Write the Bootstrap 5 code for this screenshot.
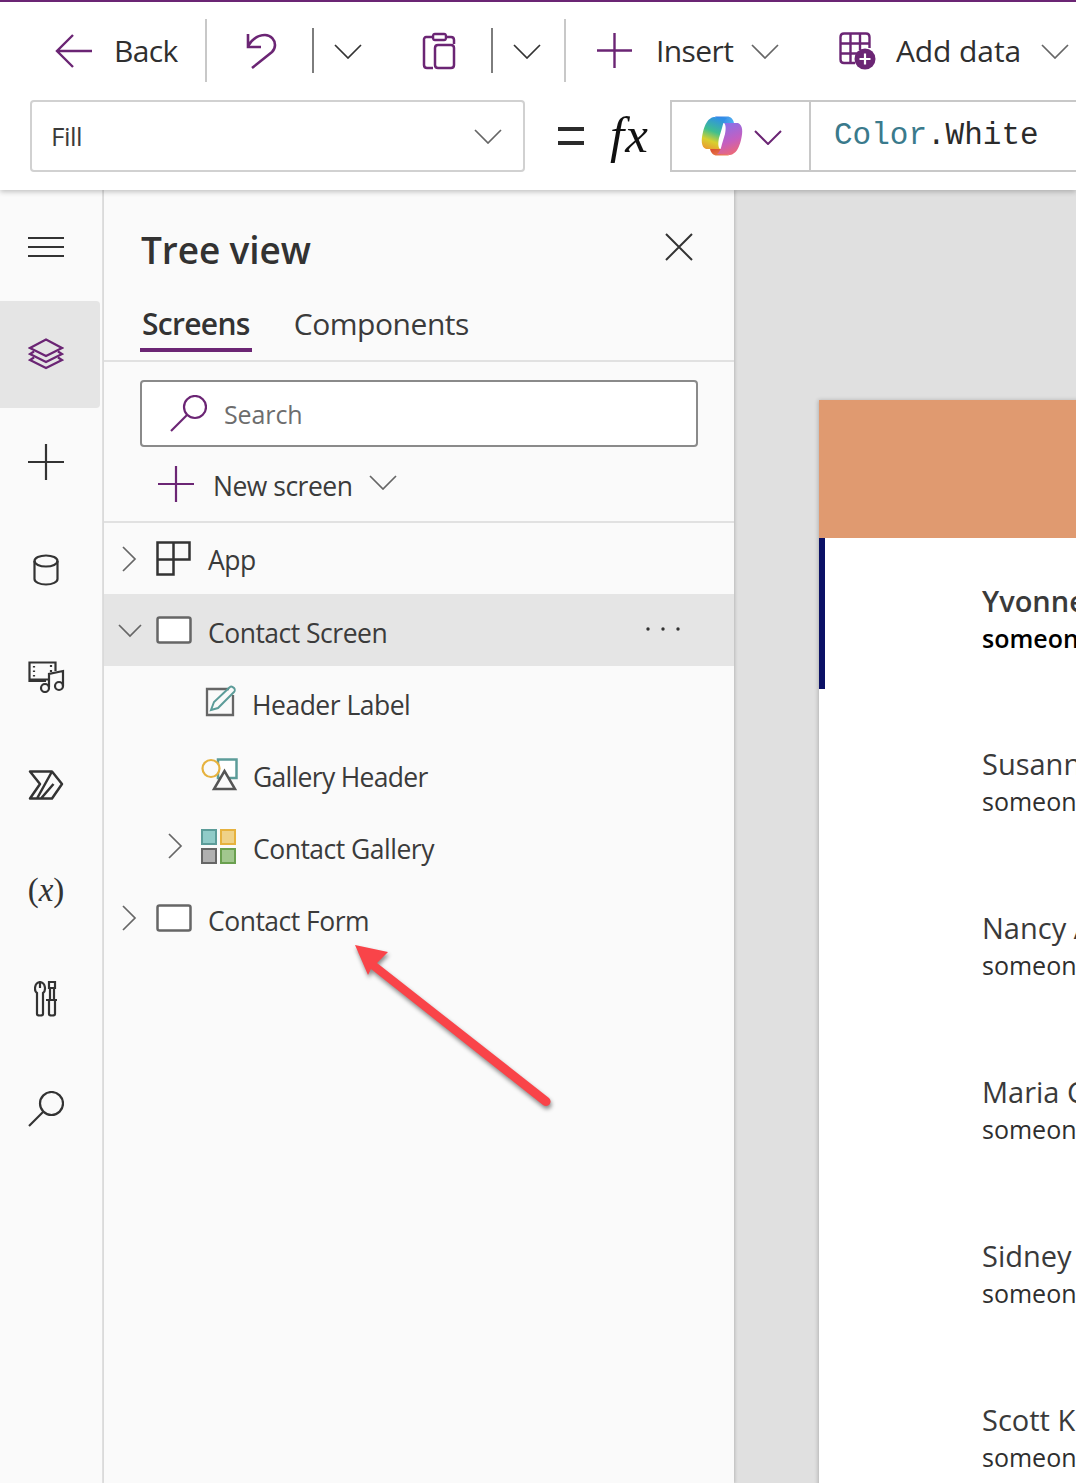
<!DOCTYPE html>
<html lang="en">
<head>
    <meta charset="UTF-8">
    <meta name="viewport" content="width=device-width, initial-scale=1.0">
    <title>Tree view</title>
    <link href="https://cdn.jsdelivr.net/npm/bootstrap@5.3.3/dist/css/bootstrap.min.css" rel="stylesheet">
    <style>
        html, body { height: 100%; }
        body {
            height: 1483px;
            overflow: hidden;
            background: #fafafa;
            color: #333;
            font-family: "Open Sans", "Noto Sans", sans-serif;
        }
        svg { display: block; flex: none; fill: none; stroke-linecap: butt; }
        .pu { stroke: #6b2574; }
        .dk { stroke: #333; }
        .gr { stroke: #666; }

        /* top */
        .top-area { height: 190px; background: #fff; border-top: 2px solid #6b2574; box-shadow: 0 2px 5px rgba(0,0,0,.22); position: relative; z-index: 3; flex: none; }
        .ribbon { height: 97px; font-size: 30px; letter-spacing: -.6px; color: #2f2f2f; }
        .rib-sep { width: 2px; height: 63px; background: #c8c8c8; flex: none; }
        .rib-sep-sm { width: 2px; height: 45px; background: #7d7d7d; flex: none; }
        .fx-row { height: 91px; padding: 0 0 18px 30px; background: #fff; }
        .prop-box { width: 495px; height: 72px; border: 2px solid #d1d1d1; border-radius: 4px; padding: 0 21px 0 19px; font-size: 26px; letter-spacing: -.5px; color: #3b3b3b; }
        .prop-box span { padding-top: 2px; }
        .eq-sign { width: 26px; height: 18px; border-top: 4px solid #2b2b2b; border-bottom: 4px solid #2b2b2b; margin-left: 33px; }
        .fx-sign { font-family: "Liberation Serif", serif; font-style: italic; font-size: 51px; line-height: 1; color: #111; width: 60px; margin-left: 26px; letter-spacing: 1px; }
        .copilot-box { width: 141px; height: 72px; border: 2px solid #c8c8c8; padding-left: 29px; gap: 11px; }
        .code-box { flex: 1; height: 72px; border: 2px solid #c8c8c8; border-left: 0; border-right: 0; padding: 2px 0 0 23px; font-family: "Liberation Mono", monospace; font-size: 31px; color: #2b2b2b; }
        .code-type { color: #3a7a8c; }

        /* body */
        .work-area { height: 1293px; }
        .side-rail { width: 104px; flex: none; border-right: 2px solid #e1e1e1; padding-top: 3px; background: #fafafa; }
        .rail-btn { height: 107.6px; width: 100px; }
        .rail-btn.on { background: #e5e5e5; border-radius: 0 4px 4px 0; }
        .rail-x { font-family: "Liberation Serif", serif; font-size: 33px; line-height: 1; color: #333; margin-top: -4px; }
        .tree-panel { width: 630px; flex: none; background: #fafafa; box-shadow: 1px 0 3px rgba(0,0,0,.18); position: relative; z-index: 2; }
        .panel-head { height: 113px; padding: 8px 41px 0 37px; }
        .panel-title { font-size: 37px; font-weight: 600; letter-spacing: -.1px; color: #323232; margin: 0; }
        .tabs-bar { height: 59px; padding-left: 36px; border-bottom: 2px solid #e1e1e1; gap: 40px; font-size: 30px; letter-spacing: -.45px; }
        .tabs-bar .nav-link { color: #3b3b3b; padding: 0 2px; height: 49px; line-height: 42px; }
        .tabs-bar .nav-link.active { color: #333; font-weight: 600; letter-spacing: -.7px; border-bottom: 4px solid #6b2574; }
        .search-box { width: 558px; height: 67px; margin: 18px 0 0 36px; background: #fff; border: 2px solid #8a8a8a; border-radius: 4px; padding: 0 0 0 28px; gap: 17px; font-size: 25px; letter-spacing: -.1px; color: #6d6d6d; }
        .search-box span { padding-top: 2px; }
        .new-row { height: 76px; padding-left: 54px; border-bottom: 2px solid #e1e1e1; font-size: 26.5px; letter-spacing: -.5px; color: #3b3b3b; }
        .new-row span { padding-top: 6px; }
        .tree-list { border-radius: 0; }
        .tree-row { height: 72px; padding: 0; background: transparent; border: 0; font-size: 26.5px; letter-spacing: -.5px; color: #3b3b3b; display: flex; align-items: center; position: relative; }
        .tree-row:first-child { height: 71px; }
        .tree-row.on { background: #e5e5e5; }
        .tw { width: 52px; padding-left: 17px; flex: none; }
        .tree-row.on .tw { padding-left: 14px; }
        .tw2 { width: 97px; padding-left: 59px; flex: none; }
        .row-name, .row-name2 { margin-left: 16px; padding-top: 7px; }
        .tree-row:first-child .row-name { padding-top: 4px; }
        .row-dots { position: absolute; left: 542px; top: 33px; }

        /* canvas */
        .canvas-area { flex: 1; min-width: 0; background: #e0e0e0; padding: 210px 0 0 85px; overflow: hidden; }
        .app-screen { width: 400px; background: #fff; height: 1200px; box-shadow: -1px 0 4px rgba(0,0,0,.2); }
        .app-head { height: 138px; background: #e09a70; }
        .person { height: 164px; padding: 47px 0 0 163px; white-space: nowrap; position: relative; line-height: 1; }
        .person.sel { padding-top: 48px; }
        .person.sel::before { content: ""; position: absolute; left: 0; top: 0; width: 6px; height: 151px; background: #0b1166; }
        .person-name { font-size: 29px; color: #3a3a3a; height: 39.5px; }
        .person-mail { font-size: 25px; color: #2e2e2e; }
        .person.sel .person-name { font-weight: 600; }
        .person.sel .person-mail { font-weight: 600; color: #000; }

        .red-arrow { position: absolute; left: 340px; top: 930px; z-index: 5; filter: drop-shadow(1px 3px 2px rgba(0,0,0,.45)); }
    </style>
</head>
<body>
    <div class="d-flex flex-column">
        <div class="top-area">
            <div class="ribbon d-flex align-items-center">
                <svg style="margin-left:55px" width="38" height="36" viewBox="0 0 38 36"><path class="pu" stroke-width="2.4" d="M37 18H2M18 2 2 18l16 16"/></svg>
                <span style="margin-left:21px;width:91px">Back</span>
                <span class="rib-sep"></span>
                <svg style="margin-left:38px" width="34" height="38" viewBox="0 0 34 38"><path class="pu" stroke-width="2.6" d="M3 2v13h13M3 14C8 6 14 3 20 3c6 0 10 5 10 10 0 3-1 5-3 7L7 36"/></svg>
                <span class="rib-sep-sm" style="margin-left:33px"></span>
                <svg style="margin-left:20px" width="28" height="16" viewBox="0 0 28 16"><path class="dk" stroke-width="1.7" d="M1 2l13 13L27 2"/></svg>
                <svg style="margin-left:60px" width="34" height="38" viewBox="0 0 34 38"><path class="pu" stroke-width="2.5" d="M12 5H4a2.500 2.500 0 0 0-2 3v25c0 2 1 3 3 3h6M23 5h6c2 0 3 1 3 3v4M13 2h9c2 0 2 1 2 3s0 3-2 3h-9c-2 0-2-1-2-3s0-3 2-3zM16 13h13c2 0 3 1 3 3v17c0 2-1 3-3 3H16c-2 0-3-1-3-3V16c0-2 1-3 3-3z"/></svg>
                <span class="rib-sep-sm" style="margin-left:35px"></span>
                <svg style="margin-left:20px" width="28" height="16" viewBox="0 0 28 16"><path class="dk" stroke-width="1.7" d="M1 2l13 13L27 2"/></svg>
                <span class="rib-sep" style="margin-left:23px"></span>
                <svg style="margin-left:31px" width="35" height="35" viewBox="0 0 35 35"><path class="pu" stroke-width="2.4" d="M17.500 0v35M0 17.500h35"/></svg>
                <span style="margin-left:24px;width:95px">Insert</span>
                <svg style="margin-left:0" width="28" height="16" viewBox="0 0 28 16"><path class="gr" stroke-width="1.7" d="M1 2l13 13L27 2"/></svg>
                <svg style="margin-left:60px" width="37" height="38" viewBox="0 0 37 38"><path class="pu" stroke-width="2.4" d="M16 31H5c-2 0-3.500-1.500-3.500-3.500V5C1.500 3 3 1.500 5 1.500h22C29 1.500 30.500 3 30.500 5v11M1.500 11.500h29M1.500 21.500H20M11.500 1.500V31M21 1.500V18"/><circle cx="26" cy="27" r="10.500" fill="#6b2574"/><path d="M26 21.500v11M20.500 27h11" stroke="#fff" stroke-width="2.200"/></svg>
                <span style="margin-left:20px;width:145px;letter-spacing:-.1px">Add data</span>
                <svg width="28" height="16" viewBox="0 0 28 16"><path class="gr" stroke-width="1.7" d="M1 2l13 13L27 2"/></svg>
            </div>
            <div class="fx-row d-flex align-items-center">
                <div class="prop-box d-flex align-items-center justify-content-between">
                    <span>Fill</span>
                    <svg width="28" height="16" viewBox="0 0 28 16"><path class="gr" stroke-width="1.7" d="M1 2l13 13L27 2"/></svg>
                </div>
                <div class="eq-sign"></div>
                <div class="fx-sign">fx</div>
                <div class="copilot-box d-flex align-items-center">
                    <svg width="42" height="40" viewBox="0 0 42 40">
                        <defs>
                            <linearGradient id="cpA" x1="0.6" y1="0" x2="0.3" y2="1"><stop offset="0" stop-color="#2f8fe8"/><stop offset=".45" stop-color="#3fbf8f"/><stop offset=".75" stop-color="#d8d030"/><stop offset="1" stop-color="#e8a030"/></linearGradient>
                            <linearGradient id="cpB" x1="0.4" y1="0" x2="0.7" y2="1"><stop offset="0" stop-color="#8a70e8"/><stop offset=".55" stop-color="#c45fc0"/><stop offset="1" stop-color="#f06a70"/></linearGradient>
                            <linearGradient id="cpC" x1="0" y1="0" x2="1" y2="0"><stop offset="0" stop-color="#2d6fe0"/><stop offset="1" stop-color="#4fb0f0"/></linearGradient>
                            <linearGradient id="cpD" x1="0" y1="0" x2="1" y2="1"><stop offset="0" stop-color="#d84a30"/><stop offset="1" stop-color="#f08a50"/></linearGradient>
                        </defs>
                        <path fill="url(#cpC)" d="M14 .5h12c4 0 6 2.500 7 6.500H21z"/>
                        <path fill="url(#cpD)" d="M28 39.500H16c-4 0-6-2.500-7-6.500h12z"/>
                        <path fill="url(#cpA)" d="M13 1C7 2 4 8 2 16c-2 8-2 15 3 17h14c-2-2-2-6-1-11l3-10c1-4 2-8 5-10z"/>
                        <path fill="url(#cpB)" d="M29 39c6-1 9-7 11-15 2-8 2-15-3-17H23c2 2 2 6 1 11l-3 10c-1 4-2 8-5 10z"/>
                    </svg>
                    <svg style="margin-top:2px" width="28" height="16" viewBox="0 0 28 16"><path class="pu" stroke-width="2" d="M1 2l13 13L27 2"/></svg>
                </div>
                <div class="code-box d-flex align-items-center"><span><span class="code-type">Color</span>.White</span></div>
            </div>
        </div>

        <div class="work-area d-flex">
            <div class="side-rail d-flex flex-column">
                <div class="rail-btn pe-2 d-flex align-items-center justify-content-center">
                    <svg width="36" height="22" viewBox="0 0 36 22"><path class="dk" stroke-width="2" d="M0 2h36M0 11h36M0 20h36"/></svg>
                </div>
                <div class="rail-btn on pe-2 d-flex align-items-center justify-content-center">
                    <svg width="36" height="32" viewBox="0 0 36 32"><path class="pu" stroke-width="2.200" d="M18 1.500 34 10 18 18 2 10zM6 13.500 2 16l16 8 16-8-4-2.500M6 19.500 2 22l16 8 16-8-4-2.500"/></svg>
                </div>
                <div class="rail-btn pe-2 d-flex align-items-center justify-content-center">
                    <svg width="36" height="36" viewBox="0 0 36 36"><path class="dk" stroke-width="2.200" d="M18 0v36M0 18h36"/></svg>
                </div>
                <div class="rail-btn pe-2 d-flex align-items-center justify-content-center">
                    <svg width="26" height="32" viewBox="0 0 26 32"><path class="dk" stroke-width="2.200" d="M1.500 7v18c0 3 5 5.500 11.500 5.500s11.500-2.500 11.500-5.500V7"/><ellipse class="dk" cx="13" cy="7" rx="11.500" ry="5.500" stroke-width="2.200"/></svg>
                </div>
                <div class="rail-btn pe-2 d-flex align-items-center justify-content-center">
                    <svg width="37" height="32" viewBox="0 0 37 32"><path class="dk" stroke-width="2.200" d="M18 20H1.500V1.500h26V10M1.500 18.500H20M6 5v1.500M6 9.500V11M6 14v1.500M23 4v2M23 9v2"/><path class="dk" stroke-width="2.200" d="M21 26V13l14-3v15"/><circle class="dk" cx="17" cy="27" r="4" stroke-width="2.200"/><circle class="dk" cx="31" cy="25" r="4" stroke-width="2.200"/></svg>
                </div>
                <div class="rail-btn pe-2 d-flex align-items-center justify-content-center">
                    <svg width="36" height="30" viewBox="0 0 36 30"><path stroke="#333" stroke-width="2.500" stroke-linejoin="round" d="M2 1.500h22L34 14 24 28.500H2L12 14zM24 1.500 9 28.500M13 28.500 25.500 14"/></svg>
                </div>
                <div class="rail-btn pe-2 d-flex align-items-center justify-content-center">
                    <div class="rail-x">(<i>x</i>)</div>
                </div>
                <div class="rail-btn pe-2 d-flex align-items-center justify-content-center">
                    <svg width="24" height="37" viewBox="0 0 24 37"><path class="dk" stroke-width="2.200" d="M3 12v21c0 2 6 2 6 0V12c3-2 3-10-3-11C0 2 0 10 3 12zM6 1v6M15 1h6v6h-6zM16 7v11M20 7v11M12 19h11M15 19v14c0 2 6 2 6 0V19"/></svg>
                </div>
                <div class="rail-btn pe-2 d-flex align-items-center justify-content-center">
                    <svg width="36" height="36" viewBox="0 0 36 36" style="margin-top:3px"><circle class="dk" cx="23.500" cy="12.500" r="11.500" stroke-width="2.200"/><path class="dk" stroke-width="2.200" d="M15 21 1 35"/></svg>
                </div>
            </div>

            <div class="tree-panel">
                <div class="panel-head d-flex align-items-center justify-content-between">
                    <h1 class="panel-title">Tree view</h1>
                    <svg width="28" height="28" viewBox="0 0 28 28" style="margin-top:-8px"><path class="dk" stroke-width="2" d="M1 1l26 26M27 1 1 27"/></svg>
                </div>
                <ul class="nav tabs-bar">
                    <li class="nav-item"><a class="nav-link active" href="#">Screens</a></li>
                    <li class="nav-item"><a class="nav-link" href="#">Components</a></li>
                </ul>
                <div class="search-box d-flex align-items-center">
                    <svg width="37" height="37" viewBox="0 0 37 37"><circle class="pu" cx="25" cy="12" r="11" stroke-width="2.200"/><path class="pu" stroke-width="2.200" d="M17 20 1 36"/></svg>
                    <span>Search</span>
                </div>
                <div class="new-row d-flex align-items-center">
                    <svg width="36" height="36" viewBox="0 0 36 36"><path class="pu" stroke-width="2.200" d="M18 0v36M0 18h36"/></svg>
                    <span style="margin-left:19px;width:156px">New screen</span>
                    <svg style="margin-top:-4px" width="28" height="16" viewBox="0 0 28 16"><path class="gr" stroke-width="1.700" d="M1 2l13 13L27 2"/></svg>
                </div>
                <ul class="list-group tree-list">
                    <li class="list-group-item tree-row">
                        <span class="tw"><svg width="16" height="28" viewBox="0 0 16 28"><path class="gr" stroke-width="1.700" d="M2 2l12 12L2 26"/></svg></span>
                        <svg width="35" height="35" viewBox="0 0 35 35"><path class="dk" stroke-width="2.500" d="M1.500 1.500h32v17h-32zM1.500 18.500v15h16v-32"/></svg>
                        <span class="row-name" style="margin-left:17px">App</span>
                    </li>
                    <li class="list-group-item tree-row on">
                        <span class="tw"><svg width="24" height="15" viewBox="0 0 24 15"><path class="gr" stroke-width="1.700" d="M1 2l11 11L23 2"/></svg></span>
                        <svg width="36" height="28" viewBox="0 0 36 28"><rect class="gr" x="1.500" y="1.500" width="33" height="25" rx="2" fill="#fff" stroke-width="2.500"/></svg>
                        <span class="row-name">Contact Screen</span>
                        <svg class="row-dots" width="34" height="4" viewBox="0 0 34 4"><g fill="#333"><circle cx="2" cy="2" r="1.700"/><circle cx="17" cy="2" r="1.700"/><circle cx="32" cy="2" r="1.700"/></g></svg>
                    </li>
                    <li class="list-group-item tree-row">
                        <span class="tw2"></span>
                        <svg width="32" height="32" viewBox="0 0 32 32" style="margin-left:4px;margin-top:-2px"><path stroke="#666" stroke-width="2.300" d="M24 4H2v26h26V10"/><path stroke="#5c9c99" stroke-width="2" d="M6 25l3-8L25 2c1-1 3 0 4 1s1 3 0 4L13 23z"/></svg>
                        <span class="row-name2" style="margin-left:15px">Header Label</span>
                    </li>
                    <li class="list-group-item tree-row">
                        <span class="tw2"></span>
                        <svg width="38" height="33" viewBox="0 0 38 33"><rect x="17" y="1.500" width="18.500" height="18.500" fill="#fff" stroke="#5c9c99" stroke-width="2.500"/><circle cx="10" cy="10.500" r="8.500" stroke="#e6b23e" stroke-width="2.200" fill="#fafafa"/><path d="M13 31h21L23.500 13z" stroke="#555" stroke-width="2.500" fill="#fafafa"/></svg>
                        <span class="row-name2" style="margin-left:14px;letter-spacing:-.7px">Gallery Header</span>
                    </li>
                    <li class="list-group-item tree-row">
                        <span class="tw2"><svg width="16" height="28" viewBox="0 0 16 28" style="margin-left:4px"><path class="gr" stroke-width="1.700" d="M2 2l12 12L2 26"/></svg></span>
                        <svg width="35" height="35" viewBox="0 0 35 35"><rect x="1" y="1" width="14" height="14" fill="#90cbc8" stroke="#5c9c99" stroke-width="2"/><rect x="20" y="1" width="14" height="14" fill="#efd288" stroke="#e6b23e" stroke-width="2"/><rect x="1" y="20" width="14" height="14" fill="#b0b0b0" stroke="#666" stroke-width="2"/><rect x="20" y="20" width="14" height="14" fill="#a1c78e" stroke="#6aa04f" stroke-width="2"/></svg>
                        <span class="row-name2" style="margin-left:17px">Contact Gallery</span>
                    </li>
                    <li class="list-group-item tree-row">
                        <span class="tw"><svg width="16" height="28" viewBox="0 0 16 28"><path class="gr" stroke-width="1.700" d="M2 2l12 12L2 26"/></svg></span>
                        <svg width="36" height="28" viewBox="0 0 36 28"><rect class="gr" x="1.500" y="1.500" width="33" height="25" rx="2" fill="#fff" stroke-width="2.500"/></svg>
                        <span class="row-name">Contact Form</span>
                    </li>
                </ul>
            </div>

            <div class="canvas-area">
                <div class="app-screen">
                    <div class="app-head"></div>
                    <div class="person sel"><div class="person-name">Yvonne McKay</div><div class="person-mail">someone_a@example.com</div></div>
                    <div class="person"><div class="person-name">Susanna Stubberod</div><div class="person-mail">someone_b@example.com</div></div>
                    <div class="person"><div class="person-name">Nancy Anderson</div><div class="person-mail">someone_c@example.com</div></div>
                    <div class="person"><div class="person-name">Maria Campbell</div><div class="person-mail">someone_d@example.com</div></div>
                    <div class="person"><div class="person-name">Sidney Higa</div><div class="person-mail">someone_e@example.com</div></div>
                    <div class="person"><div class="person-name">Scott Konersmann</div><div class="person-mail">someone_f@example.com</div></div>
                </div>
            </div>
        </div>
    </div>

    <svg class="red-arrow" width="230" height="190" viewBox="0 0 230 190"><path fill="#f94449" d="M15 15 48 22 37 33 209 168a4.500 4.500 0 0 1-6 7L31 39 28 45z"/></svg>

    <script src="https://cdn.jsdelivr.net/npm/bootstrap@5.3.3/dist/js/bootstrap.bundle.min.js"></script>
</body>
</html>
